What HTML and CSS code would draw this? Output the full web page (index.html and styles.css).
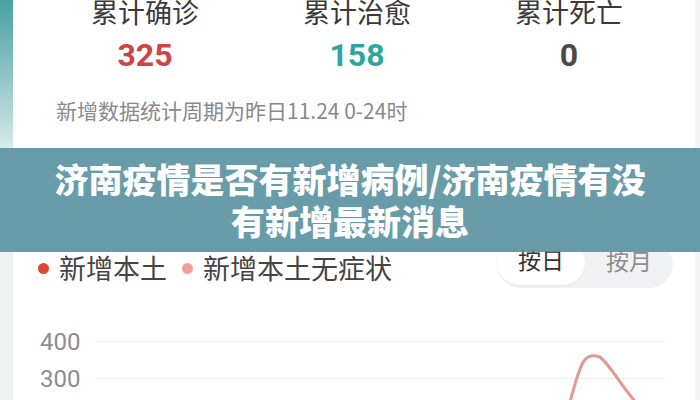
FILE: index.html
```html
<!DOCTYPE html>
<html lang="zh-CN">
<head>
    <meta charset="UTF-8">
    <meta name="viewport" content="width=device-width, initial-scale=1.0">
    <title>济南疫情是否有新增病例</title>
    <link rel="stylesheet" href="styles.css">
</head>
<body>
    <div class="side">
        <div class="side-top"></div>
    </div>

    <div class="page">
        <div class="stats">
            <div class="stat">
                <p class="stat-label">累计确诊</p>
                <p class="stat-num red">325</p>
            </div>
            <div class="stat">
                <p class="stat-label">累计治愈</p>
                <p class="stat-num teal">158</p>
            </div>
            <div class="stat">
                <p class="stat-label">累计死亡</p>
                <p class="stat-num grey">0</p>
            </div>
        </div>
        <p class="note">新增数据统计周期为昨日11.24 0-24时</p>

        <div class="chart-head">
            <div class="legend">
                <span class="dot dot-red"></span>
                <span>新增本土</span>
                <span class="dot dot-pink"></span>
                <span>新增本土无症状</span>
            </div>
            <div class="toggle">
                <span class="toggle-item active">按日</span>
                <span class="toggle-item">按月</span>
            </div>
        </div>

        <div class="chart">
            <div class="chart-row">
                <span class="axis">400</span>
                <span class="grid-line"></span>
            </div>
            <div class="chart-row">
                <span class="axis">300</span>
                <span class="grid-line"></span>
            </div>
            <svg class="curve" width="120" height="70" viewBox="0 0 120 70">
                <path d="M8 70 C14 50 18 30 24 22 C28 16 34 16 40 18 C52 28 64 52 82 70" fill="none" stroke="#e39a92" stroke-width="3"/>
            </svg>
        </div>
    </div>

    <!-- bandeau du titre -->
    <div class="banner">
        <h1>济南疫情是否有新增病例/济南疫情有没<br>有新增最新消息</h1>
    </div>
</body>
</html>
```

FILE: styles.css
```css
body {
    margin: 0;
    width: 700px;
    height: 400px;
    overflow: hidden;
    display: flex;
    background: #fff;
    font-family: "Noto Sans CJK SC", "Noto Sans", sans-serif;
    color: #333;
}

p {
    margin: 0;
}

.side {
    width: 13px;
    background: #eff1f3;
    flex-shrink: 0;
}

.side-top {
    height: 148px;
    background: linear-gradient(to bottom, #48a0a2, #9ccbcc 60%, #d8ebeb);
}

.page {
    flex: 1;
    border-right: 5px solid #f3f5f6;
}

.stats {
    display: grid;
    grid-template-columns: repeat(3, 212px);
    padding-left: 26px;
    margin-top: -6px;
}

.stat {
    text-align: center;
}

.stat-label {
    font-size: 27px;
    line-height: 36px;
    color: #3a3a3a;
}

.stat-num {
    font-family: Roboto, "Noto Sans", sans-serif;
    font-weight: bold;
    font-size: 32px;
    line-height: 40px;
    margin-top: 5px;
}

.red {
    color: #cc4444;
}

.teal {
    color: #2fa5a2;
}

.grey {
    color: #4a4a4a;
}

.note {
    margin-top: 22px;
    padding-left: 43px;
    font-size: 21px;
    line-height: 26px;
    color: #8a8a8a;
}

.chart-head {
    margin-top: 117px;
    display: flex;
    justify-content: space-between;
    align-items: flex-start;
    padding: 0 22px 0 25px;
}

.legend {
    display: flex;
    align-items: center;
    font-size: 27px;
    line-height: 36px;
    margin-top: 10px;
    color: #444;
}

.dot {
    width: 11px;
    height: 11px;
    border-radius: 50%;
    margin-right: 10px;
}

.dot-red {
    background: #d94a35;
}

.dot-pink {
    background: #f0a19b;
    margin-left: 15px;
}

.toggle {
    display: flex;
    background: #f1f2f4;
    border-radius: 24px;
    height: 48px;
    width: 176px;
}

.toggle-item {
    flex: 1;
    display: flex;
    align-items: center;
    justify-content: center;
    font-size: 23px;
    color: #8c8c8c;
    padding-bottom: 8px;
    border-radius: 24px;
}

.toggle-item.active {
    background: #fff;
    color: #333;
    margin-bottom: 3px;
    box-shadow: 0 1px 3px rgba(0, 0, 0, 0.05);
}

.chart {
    position: relative;
    margin-top: 35px;
    padding-left: 27px;
}

.chart-row {
    display: flex;
    align-items: center;
    height: 37px;
}

.axis {
    font-family: Roboto, "Noto Sans", sans-serif;
    font-size: 24px;
    color: #8e8e8e;
    width: 55px;
}

.grid-line {
    width: 570px;
    height: 1px;
    background: #eeeeee;
}

.curve {
    position: absolute;
    left: 547px;
    top: 16px;
}

.banner {
    position: absolute;
    left: 0;
    top: 148px;
    width: 700px;
    height: 104px;
    background: rgba(92, 148, 162, 0.92);
    display: flex;
    align-items: center;
    justify-content: center;
}

.banner h1 {
    margin: 0;
    text-align: center;
    color: #fff;
    font-size: 34px;
    line-height: 42px;
    font-weight: 900;
}
```
